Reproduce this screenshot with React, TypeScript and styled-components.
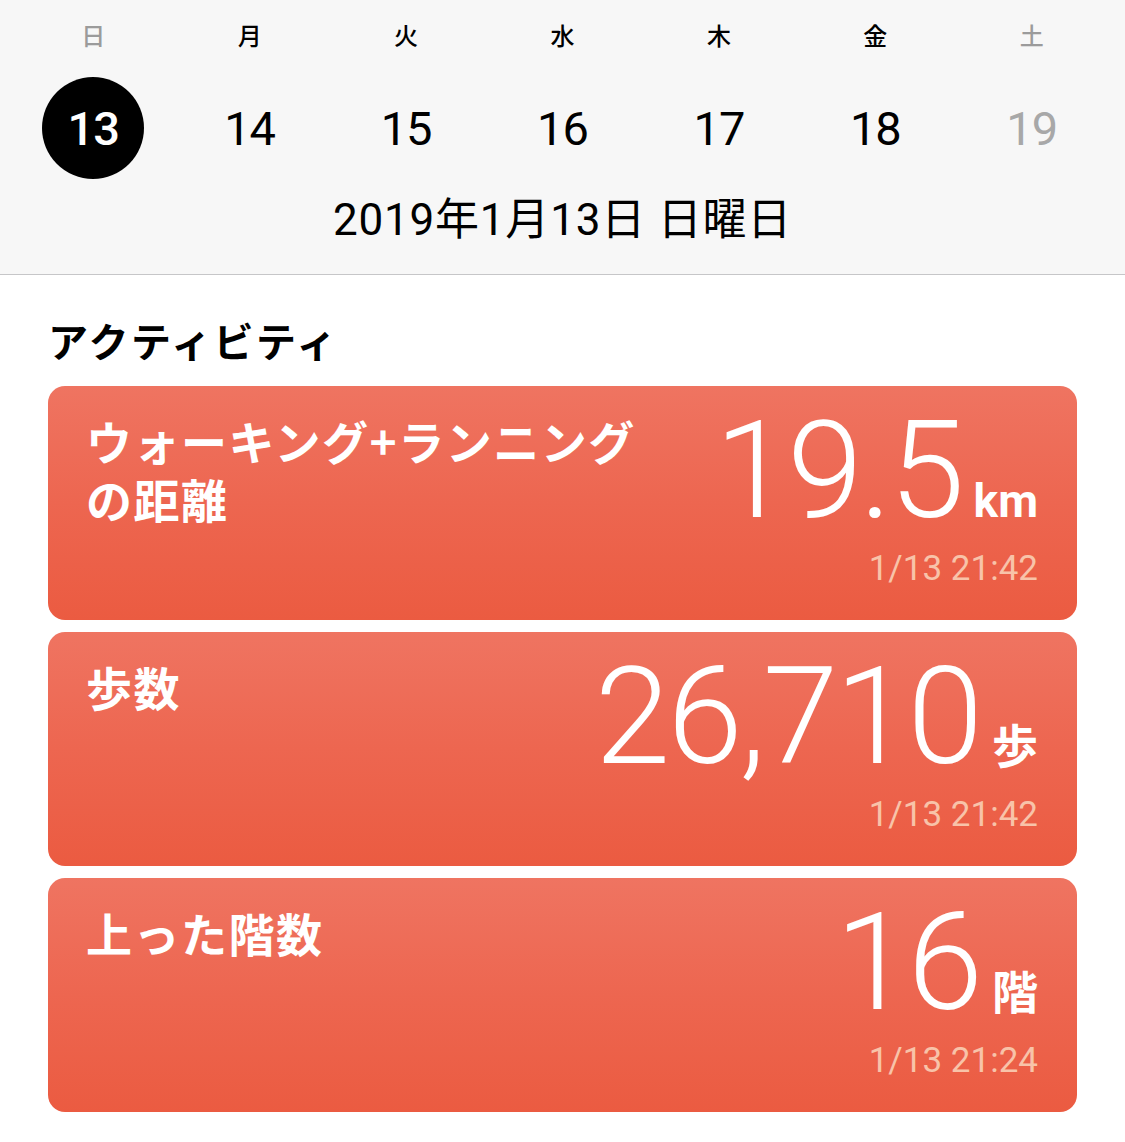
import { FC } from "react";
import styled, { createGlobalStyle } from "styled-components";

type TDay = {
  label: string;
  date: number;
  muted?: boolean;
  selected?: boolean;
};

type TActivity = {
  id: string;
  title: string[];
  value: string;
  unit: string;
  time: string;
};

const days: TDay[] = [
  { label: "日", date: 13, muted: true, selected: true },
  { label: "月", date: 14 },
  { label: "火", date: 15 },
  { label: "水", date: 16 },
  { label: "木", date: 17 },
  { label: "金", date: 18 },
  { label: "土", date: 19, muted: true },
];

const activities: TActivity[] = [
  {
    id: "distance",
    title: ["ウォーキング+ランニング", "の距離"],
    value: "19.5",
    unit: "km",
    time: "1/13 21:42",
  },
  { id: "steps", title: ["歩数"], value: "26,710", unit: "歩", time: "1/13 21:42" },
  { id: "floors", title: ["上った階数"], value: "16", unit: "階", time: "1/13 21:24" },
];

const App: FC = () => {
  return (
    <Page>
      <GlobalStyle />
      <Header>
        <WeekGrid>
          {days.map((d) => (
            <WeekLabel key={d.label} $muted={d.muted}>
              {d.label}
            </WeekLabel>
          ))}
        </WeekGrid>
        <DayGrid>
          {days.map((d) => (
            <DayCell key={d.date}>
              <DayNumber $selected={d.selected} $muted={d.muted && !d.selected}>
                {d.date}
              </DayNumber>
            </DayCell>
          ))}
        </DayGrid>
        <DateLine>2019年1月13日 日曜日</DateLine>
      </Header>
      <Body>
        <SectionTitle>アクティビティ</SectionTitle>
        <CardList>
          {activities.map((a) => (
            <Card key={a.id}>
              <CardTitle>
                {a.title.map((line) => (
                  <TitleLine key={line}>{line}</TitleLine>
                ))}
              </CardTitle>
              <CardRight>
                <ValueRow>
                  <Value>{a.value}</Value>
                  <Unit>{a.unit}</Unit>
                </ValueRow>
                <Time>{a.time}</Time>
              </CardRight>
            </Card>
          ))}
        </CardList>
      </Body>
    </Page>
  );
};

export default App;

const GlobalStyle = createGlobalStyle`
  html, body {
    margin: 0;
    padding: 0;
    background: #ffffff;
  }
  body {
    font-family: Roboto, "Noto Sans CJK JP", sans-serif;
    color: #000;
  }
`;

const Page = styled.div`
  width: 1125px;
  min-height: 1142px;
  display: flex;
  flex-direction: column;
  background: #ffffff;
`;

const Header = styled.div`
  display: flex;
  flex-direction: column;
  padding: 18px 15px 29px;
  background: #f7f7f7;
  border-bottom: 1px solid #c6c6c8;
`;

const WeekGrid = styled.div`
  display: grid;
  grid-template-columns: repeat(7, 1fr);
`;

const WeekLabel = styled.div<{ $muted?: boolean }>`
  text-align: center;
  font-family: "Noto Sans CJK JP", sans-serif;
  font-size: 24px;
  font-weight: 500;
  line-height: 34px;
  color: ${({ $muted }) => ($muted ? "#9b9b9b" : "#000")};
`;

const DayGrid = styled.div`
  display: grid;
  grid-template-columns: repeat(7, 1fr);
  margin-top: 25px;
`;

const DayCell = styled.div`
  display: flex;
  justify-content: center;
`;

const DayNumber = styled.div<{ $selected?: boolean; $muted?: boolean }>`
  width: 102px;
  height: 102px;
  border-radius: 50%;
  display: flex;
  align-items: center;
  justify-content: center;
  font-size: 47px;
  font-weight: ${({ $selected }) => ($selected ? 500 : 400)};
  letter-spacing: -1px;
  background: ${({ $selected }) => ($selected ? "#000" : "transparent")};
  color: ${({ $selected, $muted }) =>
    $selected ? "#fff" : $muted ? "#a8a8a8" : "#000"};
`;

const DateLine = styled.div`
  margin-top: 16px;
  text-align: center;
  font-size: 44px;
  line-height: 50px;
  letter-spacing: 0.8px;
  color: #000;
`;

const Body = styled.div`
  display: flex;
  flex-direction: column;
  padding: 40px 48px 30px;
`;

const SectionTitle = styled.h1`
  margin: 0 0 21px 0;
  font-family: "Noto Sans CJK JP", sans-serif;
  font-size: 40px;
  font-weight: 700;
  line-height: 50px;
  letter-spacing: 2.5px;
`;

const CardList = styled.div`
  display: flex;
  flex-direction: column;
  gap: 12px;
`;

const Card = styled.div`
  height: 234px;
  box-sizing: border-box;
  display: flex;
  justify-content: space-between;
  padding: 25px 39px 0 38px;
  border-radius: 17px;
  background: linear-gradient(180deg, #ef7461 0%, #ed6650 50%, #eb5b41 100%);
  color: #fff;
`;

const CardTitle = styled.div`
  display: flex;
  flex-direction: column;
  font-family: "Noto Sans CJK JP", sans-serif;
  font-size: 46px;
  font-weight: 700;
  letter-spacing: 1.5px;
`;

const TitleLine = styled.span`
  display: block;
  line-height: 58px;
  white-space: nowrap;
`;

const CardRight = styled.div`
  display: flex;
  flex-direction: column;
  align-items: flex-end;
`;

const ValueRow = styled.div`
  display: flex;
  align-items: baseline;
`;

const Value = styled.span`
  font-family: Roboto, sans-serif;
  font-size: 136px;
  font-weight: 300;
  line-height: 120px;
  letter-spacing: -3px;
`;

const Unit = styled.span`
  margin-left: 12px;
  font-family: Roboto, "Noto Sans CJK JP", sans-serif;
  font-size: 46px;
  font-weight: 700;
`;

const Time = styled.div`
  margin-top: 18px;
  font-size: 35px;
  line-height: 40px;
  color: #f8c3a9;
`;
